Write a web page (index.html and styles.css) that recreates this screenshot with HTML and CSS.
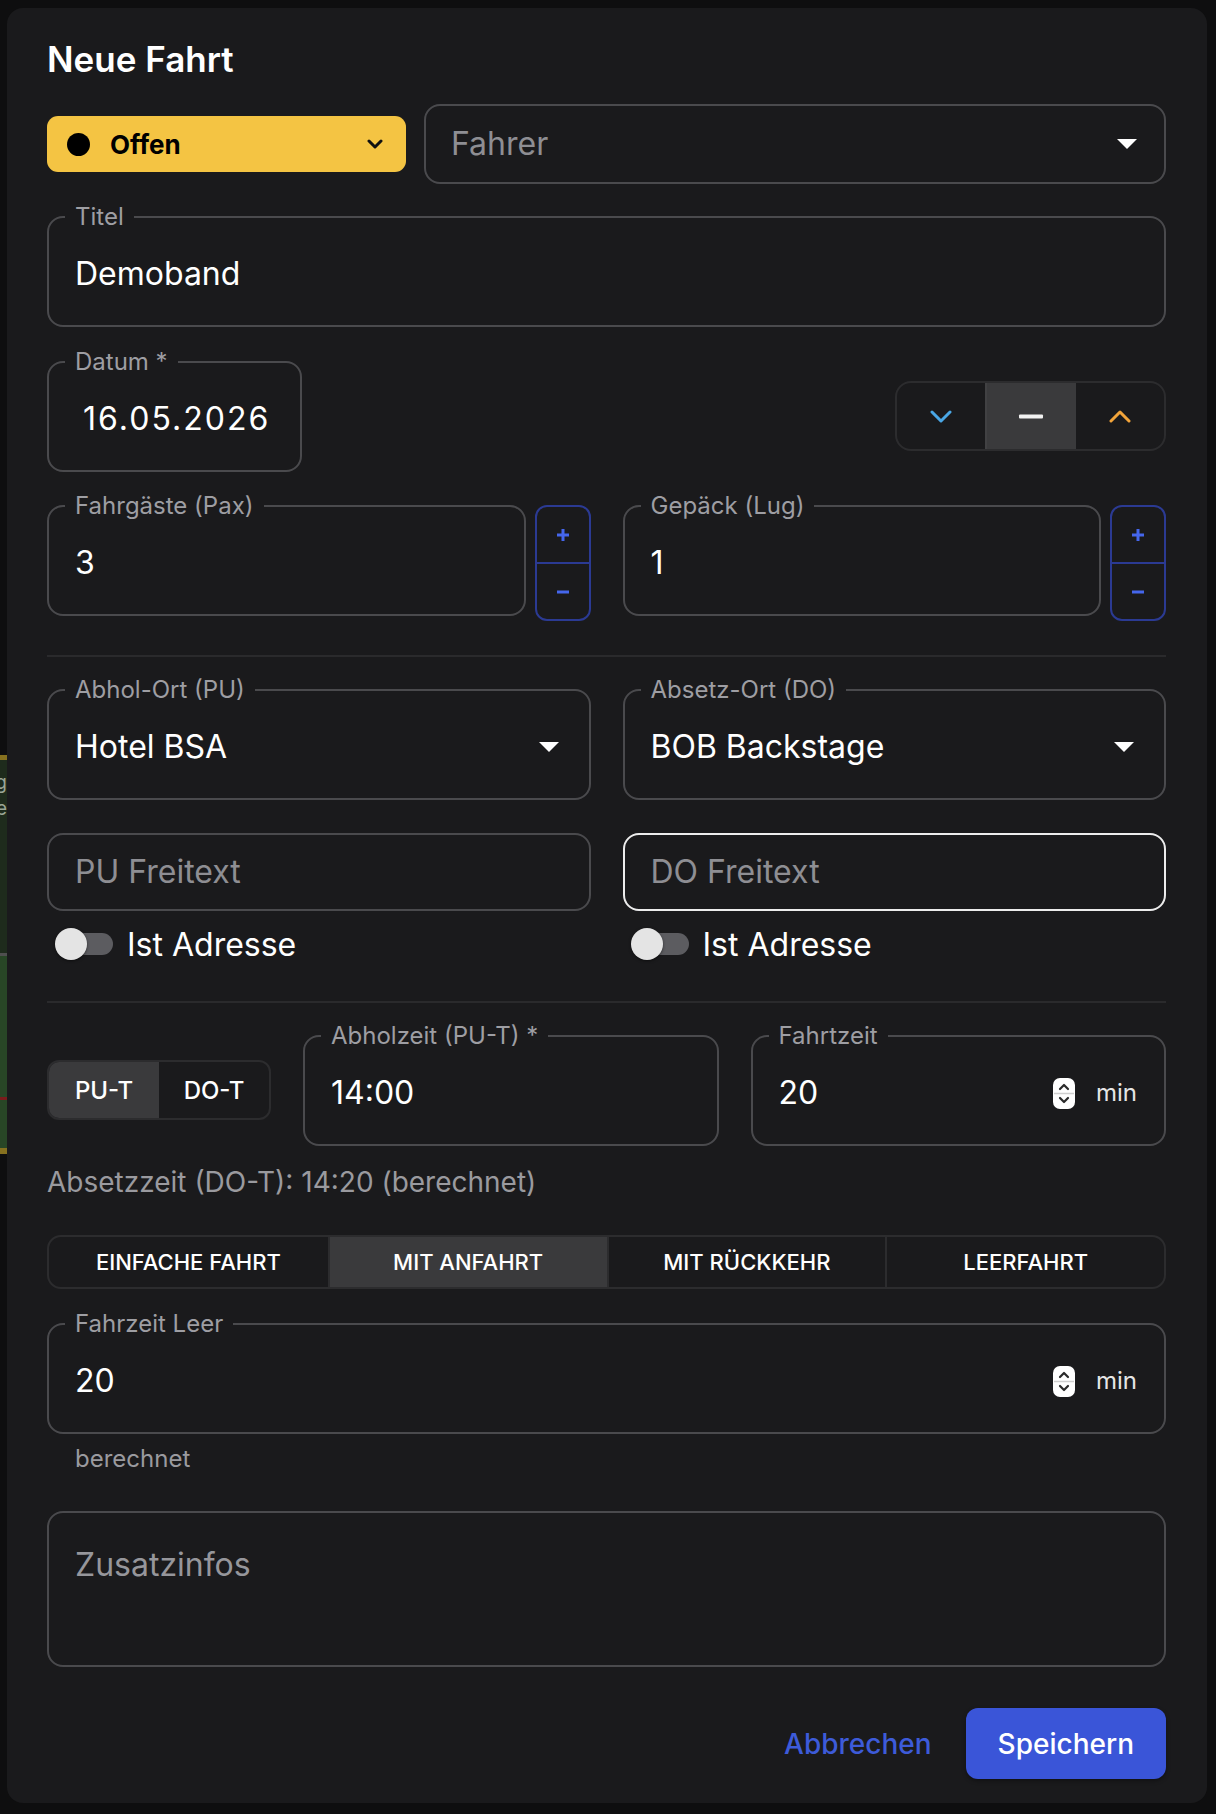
FILE: index.html
```html
<!DOCTYPE html>
<html lang="de">
<head>
<meta charset="utf-8">
<title>Neue Fahrt</title>
<link rel="stylesheet" href="styles.css">
</head>
<body>
<div class="screen">
  <aside class="behind" aria-hidden="true">
    <div class="ev ev-a"><span>Loading</span><span>Gate</span></div>
    <div class="ev ev-b"></div>
  </aside>

  <section class="dialog" role="dialog" aria-labelledby="dlg-title">
    <h2 id="dlg-title" class="dialog-title">Neue Fahrt</h2>

    <div class="row-status">
      <button class="status-btn" type="button">
        <span class="dot"></span>
        <span class="status-label">Offen</span>
        <svg class="chev" width="16" height="10" viewBox="0 0 16 10"><path d="M2 2l6 6 6-6" fill="none" stroke="#111" stroke-width="3" stroke-linecap="round" stroke-linejoin="round"/></svg>
      </button>
      <div class="box select-sm">
        <span class="placeholder">Fahrer</span>
        <span class="caret"></span>
      </div>
    </div>

    <fieldset class="field f-title">
      <legend>Titel</legend>
      <div class="value">Demoband</div>
    </fieldset>

    <div class="row-date">
      <fieldset class="field f-date">
        <legend>Datum *</legend>
        <div class="value date">16.05.2026</div>
      </fieldset>
      <div class="seg3">
        <span class="seg"><svg width="22" height="13" viewBox="0 0 22 13"><path d="M2 2l9 9 9-9" fill="none" stroke="#4aa7e6" stroke-width="3" stroke-linecap="round" stroke-linejoin="round"/></svg></span>
        <span class="seg mid"><svg width="26" height="5" viewBox="0 0 26 5"><rect x="1" y="0.5" width="24" height="4" rx="1" fill="#f2f2f2"/></svg></span>
        <span class="seg"><svg width="22" height="13" viewBox="0 0 22 13"><path d="M2 11l9-9 9 9" fill="none" stroke="#f2a43a" stroke-width="3" stroke-linecap="round" stroke-linejoin="round"/></svg></span>
      </div>
    </div>

    <div class="cols row-count">
      <div class="count-group">
        <fieldset class="field">
          <legend>Fahrgäste (Pax)</legend>
          <div class="value">3</div>
        </fieldset>
        <div class="stepper">
          <span><svg width="14" height="14" viewBox="0 0 14 14"><path d="M7 1v12M1 7h12" stroke="#4566ec" stroke-width="3"/></svg></span>
          <span><svg width="14" height="4" viewBox="0 0 14 4"><path d="M1 2h12" stroke="#4566ec" stroke-width="3"/></svg></span>
        </div>
      </div>
      <div class="count-group">
        <fieldset class="field">
          <legend>Gepäck (Lug)</legend>
          <div class="value">1</div>
        </fieldset>
        <div class="stepper">
          <span><svg width="14" height="14" viewBox="0 0 14 14"><path d="M7 1v12M1 7h12" stroke="#4566ec" stroke-width="3"/></svg></span>
          <span><svg width="14" height="4" viewBox="0 0 14 4"><path d="M1 2h12" stroke="#4566ec" stroke-width="3"/></svg></span>
        </div>
      </div>
    </div>

    <hr class="divider">

    <div class="cols row-place">
      <fieldset class="field sel">
        <legend>Abhol-Ort (PU)</legend>
        <div class="value">Hotel BSA<span class="caret"></span></div>
      </fieldset>
      <fieldset class="field sel">
        <legend>Absetz-Ort (DO)</legend>
        <div class="value">BOB Backstage<span class="caret"></span></div>
      </fieldset>
    </div>

    <div class="cols row-free">
      <div class="box free"><span class="placeholder">PU Freitext</span></div>
      <div class="box free focus"><span class="placeholder">DO Freitext</span></div>
    </div>

    <div class="cols row-switch">
      <label class="switch-row"><span class="switch"><span class="track"></span><span class="thumb"></span></span><span>Ist Adresse</span></label>
      <label class="switch-row"><span class="switch"><span class="track"></span><span class="thumb"></span></span><span>Ist Adresse</span></label>
    </div>

    <hr class="divider divider-2">

    <div class="row-time">
      <div class="toggle">
        <span class="on">PU-T</span>
        <span>DO-T</span>
      </div>
      <fieldset class="field">
        <legend>Abholzeit (PU-T) *</legend>
        <div class="value">14:00</div>
      </fieldset>
      <fieldset class="field num">
        <legend>Fahrtzeit</legend>
        <div class="value">
          <span class="num-text">20</span>
          <svg class="spin" width="22" height="31" viewBox="0 0 22 31"><rect width="22" height="31" rx="7" fill="#fff"/><path d="M1 15.5h20" stroke="#cfcfcf" stroke-width="1.5"/><path d="M7 11l4-4 4 4M7 20l4 4 4-4" fill="none" stroke="#2a2a2a" stroke-width="2.2" stroke-linecap="round" stroke-linejoin="round"/></svg>
          <span class="unit">min</span>
        </div>
      </fieldset>
    </div>

    <p class="note">Absetzzeit (DO-T): 14:20 (berechnet)</p>

    <div class="trip">
      <span>Einfache Fahrt</span>
      <span class="on">Mit Anfahrt</span>
      <span>Mit Rückkehr</span>
      <span>Leerfahrt</span>
    </div>

    <fieldset class="field num f-empty">
      <legend>Fahrzeit Leer</legend>
      <div class="value">
        <span class="num-text">20</span>
        <svg class="spin" width="22" height="31" viewBox="0 0 22 31"><rect width="22" height="31" rx="7" fill="#fff"/><path d="M1 15.5h20" stroke="#cfcfcf" stroke-width="1.5"/><path d="M7 11l4-4 4 4M7 20l4 4 4-4" fill="none" stroke="#2a2a2a" stroke-width="2.2" stroke-linecap="round" stroke-linejoin="round"/></svg>
        <span class="unit">min</span>
      </div>
    </fieldset>
    <p class="helper">berechnet</p>

    <div class="notes"><span class="placeholder">Zusatzinfos</span></div>

    <div class="actions">
      <button class="btn-text" type="button">Abbrechen</button>
      <button class="btn-primary" type="button">Speichern</button>
    </div>
  </section>
</div>
</body>
</html>
```

FILE: styles.css
```css
* {
  box-sizing: border-box;
}

html,
body {
  margin: 0;
  padding: 0;
}

body {
  width: 1216px;
  height: 1814px;
  overflow: hidden;
  background: #0e0e0f;
  color: #ffffff;
  font-family: Inter, "Liberation Sans", sans-serif;
}

.screen {
  display: flex;
  align-items: flex-start;
  height: 1814px;
}

/* calendar events peeking out behind the modal */
.behind {
  width: 7px;
  flex: none;
  overflow: hidden;
  padding-top: 755px;
  display: flex;
  flex-direction: column;
}

.ev-a {
  height: 201px;
  border-top: 5px solid #86711f;
  border-bottom: 3px solid #4f4f4f;
  background: #1e2b1c;
  padding-top: 12px;
  display: flex;
  flex-direction: column;
  gap: 4px;
}

.ev-a span {
  direction: rtl;
  white-space: nowrap;
  font-size: 19px;
  line-height: 22px;
  color: #9aa596;
}

.ev-b {
  height: 198px;
  border-bottom: 6px solid #86711f;
  background: linear-gradient(#284626 0 141px, #7a1c1c 141px 144px, #284626 144px);
}

/* modal */
.dialog {
  flex: none;
  width: 1200px;
  margin-top: 8px;
  padding: 30px 41px 24px 40px;
  background: #1a1a1c;
  border-radius: 16px;
  display: flex;
  flex-direction: column;
}

.dialog-title {
  margin: 0;
  font-size: 35px;
  line-height: 42px;
  font-weight: 600;
  color: #ffffff;
}

/* status + driver */
.row-status {
  margin-top: 24px;
  height: 80px;
  display: flex;
  align-items: center;
  gap: 18px;
}

.status-btn {
  flex: none;
  width: 359px;
  height: 56px;
  border: 0;
  border-radius: 11px;
  background: #f4c443;
  display: flex;
  align-items: center;
  padding: 0 23px 0 20px;
  font-family: inherit;
  font-size: 26px;
  font-weight: 700;
  color: #000000;
}

.dot {
  width: 23px;
  height: 23px;
  border-radius: 50%;
  background: #000000;
  margin-right: 20px;
}

.status-label {
  flex: 1;
  text-align: left;
}

.box {
  border: 2px solid #4a4a4d;
  border-radius: 16px;
  display: flex;
  align-items: center;
  padding: 0 27px 0 26px;
}

.select-sm {
  flex: 1;
  height: 80px;
  padding-left: 25px;
}

.placeholder {
  font-size: 32px;
  line-height: 40px;
  color: #8e8e93;
}

.caret {
  margin-left: auto;
  width: 0;
  height: 0;
  border-left: 10px solid transparent;
  border-right: 10px solid transparent;
  border-top: 10px solid #ffffff;
}

/* outlined fields with floating label */
.field {
  margin: 0;
  min-width: 0;
  border: 2px solid #4a4a4d;
  border-radius: 16px;
  padding: 23px 27px 31px 26px;
}

.field legend {
  margin-left: -10px;
  padding: 0 10px;
  font-size: 24px;
  line-height: 28px;
  color: #9e9ea3;
}

.value {
  height: 40px;
  display: flex;
  align-items: center;
  font-size: 32px;
  line-height: 40px;
  color: #ffffff;
}

.field.sel {
  padding-right: 30px;
}

.f-title {
  margin-top: 19px;
}

/* date row */
.row-date {
  margin-top: 21px;
  display: flex;
  justify-content: space-between;
  align-items: flex-start;
}

.f-date {
  width: 255px;
}

.date {
  padding-left: 8px;
  letter-spacing: 2px;
}

.seg3 {
  margin-top: 33px;
  width: 271px;
  height: 70px;
  border: 2px solid #2c2c2e;
  border-radius: 16px;
  overflow: hidden;
  display: flex;
}

.seg {
  flex: 1;
  display: flex;
  align-items: center;
  justify-content: center;
}

.seg.mid {
  background: #3a3a3c;
  border-left: 2px solid #414143;
}

/* two-column rows */
.cols {
  display: grid;
  grid-template-columns: 1fr 1fr;
  column-gap: 32px;
}

.row-count {
  margin-top: 20px;
}

.count-group {
  display: flex;
  align-items: flex-start;
  gap: 9px;
}

.count-group .field {
  flex: 1;
}

.stepper {
  flex: none;
  margin-top: 13px;
  width: 56px;
  height: 116px;
  border: 2px solid #2b3a93;
  border-radius: 12px;
  display: flex;
  flex-direction: column;
}

.stepper span {
  flex: 1;
  display: flex;
  align-items: center;
  justify-content: center;
}

.stepper span + span {
  border-top: 2px solid #2b3a93;
}

.divider {
  margin: 34px 0 0;
  height: 2px;
  border: 0;
  background: #2a2a2c;
}

.divider-2 {
  margin-top: 35px;
}

.row-place {
  margin-top: 19px;
}

.row-free {
  margin-top: 33px;
}

.free {
  height: 78px;
}

.free.focus {
  border-color: #ececec;
}

.row-switch {
  margin-top: 11px;
  height: 44px;
}

.switch-row {
  display: flex;
  align-items: center;
  gap: 14px;
  padding-left: 8px;
  font-size: 32px;
  color: #ffffff;
}

.switch {
  width: 58px;
  height: 32px;
  display: flex;
  align-items: center;
}

.track {
  margin-left: 8px;
  width: 50px;
  height: 22px;
  border-radius: 11px;
  background: #5c5c60;
}

.thumb {
  margin-left: -58px;
  width: 32px;
  height: 32px;
  border-radius: 50%;
  background: #e4e4e4;
  box-shadow: 0 1px 3px rgba(0, 0, 0, 0.5);
}

/* times */
.row-time {
  margin-top: 19px;
  display: flex;
  align-items: flex-start;
  gap: 32px;
}

.row-time .field {
  flex: 1;
}

.toggle {
  flex: none;
  margin-top: 38px;
  height: 60px;
  border: 2px solid #2c2c2e;
  border-radius: 12px;
  overflow: hidden;
  display: flex;
}

.toggle span {
  width: 110px;
  display: flex;
  align-items: center;
  justify-content: center;
  font-size: 24px;
  font-weight: 500;
  color: #ffffff;
}

.toggle .on {
  background: #3a3a3c;
}

.num-text {
  flex: 1;
}

.spin {
  flex: none;
  margin-right: 21px;
}

.unit {
  font-size: 24px;
  color: #e6e6e6;
}

.note {
  margin: 16px 0 0;
  font-size: 28px;
  line-height: 40px;
  color: #9a9a9f;
}

.trip {
  margin-top: 33px;
  height: 54px;
  border: 2px solid #2c2c2e;
  border-radius: 14px;
  overflow: hidden;
  display: grid;
  grid-template-columns: repeat(4, 1fr);
}

.trip span {
  display: flex;
  align-items: center;
  justify-content: center;
  font-size: 22px;
  font-weight: 500;
  text-transform: uppercase;
  color: #ffffff;
}

.trip span + span {
  border-left: 2px solid #2c2c2e;
}

.trip .on {
  background: #3a3a3c;
}

.f-empty {
  margin-top: 21px;
}

.helper {
  margin: 5px 0 0 28px;
  font-size: 24px;
  line-height: 40px;
  color: #9a9a9f;
}

.notes {
  margin-top: 32px;
  height: 156px;
  border: 2px solid #4a4a4d;
  border-radius: 16px;
  padding: 32px 26px 0;
}

.notes .placeholder {
  color: #96969b;
}

/* footer buttons */
.actions {
  margin-top: 41px;
  display: flex;
  justify-content: flex-end;
  align-items: center;
  gap: 18px;
}

.btn-text {
  height: 71px;
  padding: 0 16px;
  border: 0;
  background: none;
  font-family: inherit;
  font-size: 28px;
  font-weight: 500;
  color: #3d5bd9;
}

.btn-primary {
  height: 71px;
  padding: 0 32px;
  border: 0;
  border-radius: 12px;
  background: #3a55d8;
  box-shadow: 0 2px 4px rgba(0, 0, 0, 0.35);
  font-family: inherit;
  font-size: 28px;
  font-weight: 500;
  color: #ffffff;
}
```
